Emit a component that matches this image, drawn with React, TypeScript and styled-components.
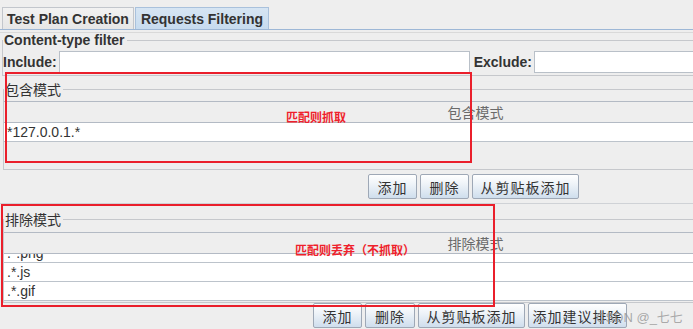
import styled, { createGlobalStyle } from 'styled-components';

const GlobalStyle = createGlobalStyle`
  html, body {
    margin: 0;
    padding: 0;
    background: #eeeeee;
  }
  * {
    box-sizing: border-box;
  }
`;

const latin = `"Liberation Sans", "Noto Sans CJK SC", sans-serif`;
const cjk = `"Noto Sans CJK SC", "Liberation Sans", sans-serif`;

const SFrame = styled.div`
  position: relative;
  width: 693px;
  height: 329px;
  overflow: hidden;
  background: #eeeeee;
  font-family: ${latin};
  color: #333333;
`;

const SInner = styled.div`
  width: 948px;
`;

const STabBar = styled.div`
  display: flex;
  height: 30px;
  padding: 7px 0 0 2px;
  border-bottom: 1px solid #9db7d6;
`;

const STab = styled.div<{ $active?: boolean }>`
  height: 22px;
  padding: 0 ${(p) => (p.$active ? 5 : 4)}px;
  margin-right: 1px;
  display: flex;
  align-items: center;
  font-size: 14px;
  font-weight: bold;
  color: #333333;
  border: 1px solid ${(p) => (p.$active ? '#a9c1dc' : '#c2c6cc')};
  border-bottom: none;
  background: ${(p) =>
    p.$active
      ? 'linear-gradient(#d6e5f3, #c7dbef)'
      : 'linear-gradient(#f2f2f2, #e6e6e6)'};
`;

const SRule = styled.div<{ $top: number; $color?: string }>`
  height: 1px;
  margin-top: ${(p) => p.$top}px;
  background: ${(p) => p.$color ?? '#d9d9d9'};
`;

const SGroup = styled.fieldset<{ $top: number; $pad: number; $left?: number }>`
  margin: ${(p) => p.$top}px 0 0 ${(p) => p.$left ?? 2}px;
  padding: ${(p) => p.$pad}px 0 0 0;
  border: 1px solid #c6c8cc;
  min-width: 0;
`;

const SLegend = styled.legend<{ $cjk?: boolean }>`
  padding: 0 2px 0 1px;
  font-family: ${(p) => (p.$cjk ? cjk : latin)};
  font-size: 14px;
  font-weight: ${(p) => (p.$cjk ? 'normal' : 'bold')};
  line-height: ${(p) => (p.$cjk ? 14 : 13)}px;
  color: #333333;
`;

const SFilterRow = styled.div`
  display: flex;
  align-items: center;
  height: 22px;
  margin-bottom: 2px;
`;

const SLabel = styled.span<{ $gap: number }>`
  font-size: 14px;
  font-weight: bold;
  color: #333333;
  margin-right: ${(p) => p.$gap}px;
  white-space: nowrap;
`;

const SInput = styled.div<{ $gap?: number }>`
  width: 411px;
  height: 22px;
  background: #ffffff;
  border: 1px solid #b9c0c8;
  margin-right: ${(p) => p.$gap ?? 0}px;
`;

const STable = styled.div`
  display: flex;
  flex-direction: column;
`;

const SHeader = styled.div<{ $h: number }>`
  height: ${(p) => p.$h}px;
  display: flex;
  align-items: center;
  justify-content: center;
  border-top: 1px solid #b3bac4;
  border-bottom: 1px solid #b3bac4;
  background: #eeeeee;
  font-family: ${cjk};
  font-size: 14px;
  color: #6a6a6a;
`;

const SRows = styled.div<{ $h: number; $shift?: number }>`
  height: ${(p) => p.$h}px;
  overflow: hidden;
  & > div:first-child {
    margin-top: ${(p) => -(p.$shift ?? 0)}px;
  }
`;

const SRow = styled.div`
  height: 19px;
  display: flex;
  align-items: center;
  padding-left: 3px;
  background: #ffffff;
  border-bottom: 1px solid #bcc3cb;
  font-family: ${latin};
  font-size: 14px;
  color: #333333;
`;

const SButtons = styled.div<{ $top: number; $left: number }>`
  display: flex;
  gap: 3px;
  margin-top: ${(p) => p.$top}px;
  padding-left: ${(p) => p.$left}px;
`;

const SButton = styled.div<{ $w: number }>`
  width: ${(p) => p.$w}px;
  height: 25px;
  display: flex;
  align-items: center;
  justify-content: center;
  border: 1px solid #9ea8b6;
  border-radius: 2px;
  background: linear-gradient(#ffffff 0%, #eef3f8 40%, #cfdeed 100%);
  font-family: ${cjk};
  font-size: 14px;
  color: #333333;
  letter-spacing: 1px;
`;

const SMark = styled.div<{ $x: number; $y: number; $w: number; $h: number }>`
  position: absolute;
  left: ${(p) => p.$x}px;
  top: ${(p) => p.$y}px;
  width: ${(p) => p.$w}px;
  height: ${(p) => p.$h}px;
  border: 2px solid #ea1f2b;
  pointer-events: none;
`;

const SNote = styled.div<{ $x: number; $y: number }>`
  position: absolute;
  left: ${(p) => p.$x}px;
  top: ${(p) => p.$y}px;
  font-family: ${cjk};
  font-size: 12px;
  line-height: 14px;
  font-weight: bold;
  color: #ef1f2c;
  white-space: nowrap;
`;

const SWatermark = styled.div`
  position: absolute;
  left: 596px;
  top: 310px;
  font-family: ${latin};
  font-size: 13px;
  line-height: 15px;
  color: rgba(150, 150, 150, 0.8);
  white-space: nowrap;
`;

export default function App() {
  return (
    <SFrame>
      <GlobalStyle />
      <SInner>
        <STabBar>
          <STab>Test Plan Creation</STab>
          <STab $active>Requests Filtering</STab>
        </STabBar>
        <SRule $top={2} />

        <SGroup $top={1} $pad={4}>
          <SLegend>Content-type filter</SLegend>
          <SFilterRow>
            <SLabel $gap={2}>Include:</SLabel>
            <SInput $gap={4} />
            <SLabel $gap={2}>Exclude:</SLabel>
            <SInput />
          </SFilterRow>
        </SGroup>

        <SGroup $top={6} $pad={5} $left={3}>
          <SLegend $cjk>包含模式</SLegend>
          <STable>
            <SHeader $h={22}>包含模式</SHeader>
            <SRows $h={46}>
              <SRow>*127.0.0.1.*</SRow>
            </SRows>
          </STable>
        </SGroup>

        <SButtons $top={4} $left={368}>
          <SButton $w={49}>添加</SButton>
          <SButton $w={49}>删除</SButton>
          <SButton $w={107}>从剪贴板添加</SButton>
        </SButtons>

        <SRule $top={4} $color="#cfd2d6" />

        <SGroup $top={8} $pad={6} $left={3}>
          <SLegend $cjk>排除模式</SLegend>
          <STable>
            <SHeader $h={22}>排除模式</SHeader>
            <SRows $h={48} $shift={10}>
              <SRow>.*.png</SRow>
              <SRow>.*.js</SRow>
              <SRow>.*.gif</SRow>
            </SRows>
          </STable>
        </SGroup>

        <SButtons $top={0} $left={313}>
          <SButton $w={49}>添加</SButton>
          <SButton $w={50}>删除</SButton>
          <SButton $w={107}>从剪贴板添加</SButton>
          <SButton $w={99}>添加建议排除</SButton>
        </SButtons>
      </SInner>

      <SMark $x={5} $y={72} $w={467} $h={91} />
      <SNote $x={286} $y={110}>匹配则抓取</SNote>
      <SMark $x={1} $y={204} $w={494} $h={103} />
      <SNote $x={295} $y={243}>匹配则丢弃（不抓取）</SNote>
      <SWatermark>CSDN @_七七</SWatermark>
    </SFrame>
  );
}
